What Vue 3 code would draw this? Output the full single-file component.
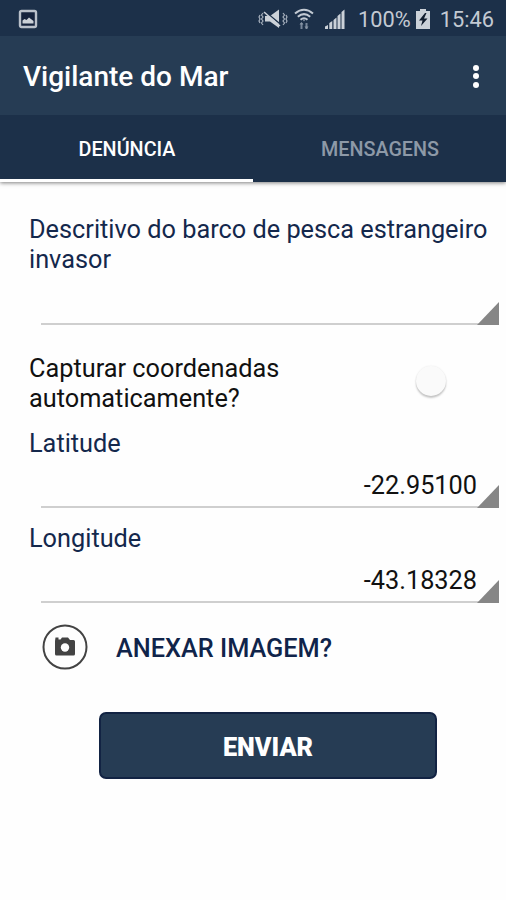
<script setup>
import { ref } from "vue"

const tabs = ["DENÚNCIA", "MENSAGENS"]
const activeTab = ref(0)
const autoCapture = ref(false)

const coords = ref([
    { label: "Latitude", value: "-22.95100" },
    { label: "Longitude", value: "-43.18328" },
])
</script>

<template>
    <div class="screen">
        <div class="status-bar">
            <svg class="picture" viewBox="0 0 20 20" width="20" height="20">
                <rect x="2" y="2" width="16" height="16" rx="1.5" />
                <path d="M4.500 14.500v-3l2-1.500 2 1 2.500-2.500 4.500 3.500v2.500z" />
            </svg>
            <div class="status-right">
                <svg class="muted" viewBox="0 0 30 22" width="30" height="22">
                    <path class="fill" d="M7 8h5l9-6.500v18.500l-9-6.500H7z" />
                    <path class="slash" d="M6.500 3l18 15" />
                    <path class="strike" d="M6 4l16 14" />
                    <path
                        class="wave"
                        d="M5 5l-1.500 2 1.500 2-1.500 2 1.500 2-1.500 2 1.500 2M2 7l-1 2 1 2-1 2 1 2M25 5l1.500 2-1.500 2 1.500 2-1.500 2 1.500 2-1.500 2M28 7l1 2-1 2 1 2-1 2"
                    />
                </svg>
                <svg class="wifi" viewBox="0 0 20 22" width="20" height="22">
                    <path
                        d="M1 5.500q9-7.500 18 0M3.800 8.700q6.200-5.200 12.400 0M6.500 11.700q3.500-3 7 0"
                    />
                    <path class="arrows" d="M7.500 21v-6M12.500 15v6" />
                    <path
                        class="dim"
                        d="M5.500 16.500l2-2.500 2 2.500zM10.500 18.500l2 2.500 2-2.500zM8.500 11.500h3l-1.500 2z"
                    />
                </svg>
                <svg class="signal" viewBox="0 0 20 20" width="20" height="20">
                    <path
                        d="M0 17.500l3-1.500v4H0zM4.300 14l3-2v8h-3zM8.500 11l3-2.500V20h-3zM12.500 7l3-2.500V20h-3zM16.500 3l3-2.500V20h-3z"
                    />
                </svg>
                <span class="percent">100%</span>
                <svg class="battery" viewBox="0 0 14 20" width="14" height="20">
                    <path d="M4 0h6v2h4v18H0V2h4z" />
                    <path class="bolt" d="M9 4L3 11.500h3.500L5 17l6.500-7.500H8L10.500 4z" />
                </svg>
                <span class="clock">15:46</span>
            </div>
        </div>

        <header class="app-bar">
            <h1>Vigilante do Mar</h1>
            <div class="menu"><i></i><i></i><i></i></div>
        </header>

        <nav class="tabs">
            <div
                v-for="(tab, i) in tabs"
                :key="tab"
                @click="activeTab = i"
                :class="['tab', { active: activeTab === i }]"
            >
                <span>{{ tab }}</span>
            </div>
        </nav>

        <main class="form">
            <p class="label">
                Descritivo do barco de pesca estrangeiro invasor
            </p>
            <div class="field empty"></div>

            <div class="capture">
                <p>Capturar coordenadas<br />automaticamente?</p>
                <div
                    class="switch"
                    :class="{ on: autoCapture }"
                    @click="autoCapture = !autoCapture"
                ></div>
            </div>

            <div v-for="coord in coords" :key="coord.label" class="coord">
                <p class="label">{{ coord.label }}</p>
                <div class="field">
                    <span>{{ coord.value }}</span>
                </div>
            </div>

            <div class="attach">
                <svg viewBox="0 0 46 46" width="46" height="46">
                    <circle class="ring" cx="23" cy="23" r="21.500" />
                    <path
                        d="M13.500 13.500h3v2h2l1.500-2h6l2 2.500h3.500q1.500 0 1.500 1.500V30q0 1.500-1.500 1.500h-17Q13 31.500 13 30V17z"
                    />
                    <circle class="lens" cx="23" cy="23.500" r="4.200" />
                </svg>
                <span>ANEXAR IMAGEM?</span>
            </div>

            <button class="send">ENVIAR</button>
        </main>
    </div>
</template>

<style>
body {
    background-color: #fefefe;
}
</style>

<style scoped>
.screen {
    height: 900px;
    overflow: hidden;
    background-color: #fefefe;
    font-family: Roboto, sans-serif;
    font-size: 25.3px;
    line-height: 30px;
    color: #111;
}

p,
h1 {
    margin: 0;
}

.status-bar {
    display: flex;
    justify-content: space-between;
    align-items: center;
    height: 36px;
    padding: 0 12px 0 18px;
    box-sizing: border-box;
    background-color: #1c3049;
    color: #c3cad3;
    font-size: 21.8px;
}

.status-bar svg {
    flex: none;
    fill: #cbd1d8;
}

.picture {
    margin-top: 2px;
}

.picture rect {
    fill: #15233d;
    stroke: #b9c0ca;
    stroke-width: 2.4;
}

.status-right {
    display: flex;
    align-items: center;
    height: 36px;
    padding-top: 3px;
    box-sizing: border-box;
}

.status-right svg {
    margin-bottom: 2px;
}

.muted .slash {
    stroke: #1c3049;
    stroke-width: 1.6;
}

.muted .strike {
    stroke: #cbd1d8;
    stroke-width: 1.6;
}

.muted .wave {
    fill: none;
    stroke: #a6b0bd;
    stroke-width: 1.2;
}

.wifi {
    margin-left: 6px;
}

.wifi path {
    fill: none;
    stroke: #c3cad3;
    stroke-width: 2;
}

.wifi .arrows {
    stroke: #77869a;
}

.wifi .dim {
    fill: #8996a6;
    stroke: none;
}

.signal {
    margin-left: 11px;
}

.percent {
    margin-left: 13px;
}

.battery {
    margin-left: 5px;
}

.battery .bolt {
    fill: #111d2e;
}

.clock {
    margin-left: 10px;
}

.app-bar {
    display: flex;
    justify-content: space-between;
    align-items: center;
    height: 79px;
    padding: 1px 27px 0 23px;
    box-sizing: border-box;
    background-color: #263c54;
    color: #fff;
}

.app-bar h1 {
    padding-top: 2px;
    font-size: 28px;
    font-weight: 500;
}

.menu {
    display: flex;
    flex-direction: column;
    gap: 2.5px;
}

.menu i {
    width: 6px;
    height: 6px;
    border-radius: 50%;
    background-color: #fff;
}

.tabs {
    display: flex;
    height: 67px;
    background-color: #1c3049;
    box-shadow: 0 1px 4px rgba(0, 0, 0, 0.5);
    clip-path: inset(0 0 -8px 0);
}

.tab {
    display: flex;
    flex: 1;
    justify-content: center;
    align-items: center;
    border-bottom: 3px solid transparent;
    padding: 6px 0 0 1px;
    box-sizing: border-box;
    font-size: 19.8px;
    font-weight: 500;
    color: #8d99a7;
}

.tab.active {
    border-bottom-color: #fff;
    color: #fff;
}

.form {
    padding: 33px 7px 0 29px;
}

.label {
    color: #14284c;
}

.field {
    display: flex;
    justify-content: flex-end;
    align-items: flex-start;
    height: 49px;
    margin-left: 12px;
    padding: 12px 22px 0 0;
    box-sizing: border-box;
    border-bottom: 2px solid #cfcfcf;
    position: relative;
}

.field::after {
    content: "";
    position: absolute;
    right: 0;
    bottom: -2px;
    width: 22px;
    height: 23px;
    background-color: #868686;
    clip-path: polygon(100% 0, 100% 100%, 0 100%);
}

.field.empty {
    height: 50px;
}

.capture {
    display: flex;
    justify-content: space-between;
    align-items: flex-start;
    padding: 29px 53px 15px 0;
}

.switch {
    width: 30px;
    height: 30px;
    margin-top: 12px;
    border-radius: 50%;
    background-color: #fafafa;
    box-shadow: 0 2px 2px rgba(0, 0, 0, 0.22), 0 0 2px rgba(0, 0, 0, 0.08);
}

.switch.on {
    background-color: #263c54;
}

.coord {
    height: 95px;
}

.attach {
    display: flex;
    align-items: center;
    gap: 28px;
    height: 46px;
    margin: 5px 0 42px 13px;
    font-weight: 500;
    color: #10244a;
}

.attach span {
    padding-top: 4px;
}

.attach svg {
    fill: #434343;
}

.attach .ring {
    fill: none;
    stroke: #434343;
    stroke-width: 2;
}

.attach .lens {
    fill: #fefefe;
}

.send {
    display: block;
    width: 338px;
    height: 67px;
    margin-left: 70px;
    padding: 4px 0 0;
    border: 2px solid #122343;
    border-radius: 7px;
    background-color: #263c54;
    color: #fff;
    font-family: inherit;
    font-size: 25.3px;
    font-weight: 900;
}
</style>
